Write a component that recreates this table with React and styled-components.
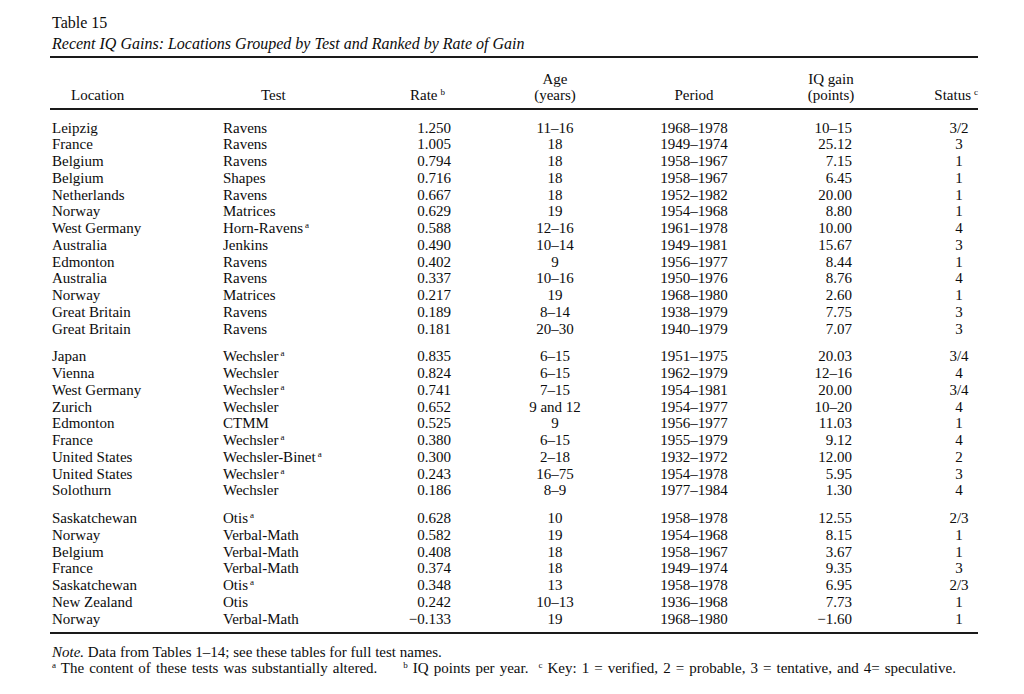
import React from 'react';
import styled, { createGlobalStyle } from 'styled-components';

const GlobalStyle = createGlobalStyle`
  html, body {
    margin: 0;
    background: #ffffff;
  }
  body {
    font-family: "Liberation Serif", "Times New Roman", serif;
    color: #0c0c0c;
  }
`;

// track widths, left edge of the table sits at x=50
const COLUMNS = '172px 118px 111px 208px 70px 204px 45px';

const HEAD = [
  { lines: ['Location'], align: 'flex-start', pl: 21 },
  { lines: ['Test'], align: 'flex-start', pl: 39 },
  { lines: ['Rate'], sup: 'b', align: 'flex-end', pr: 6 },
  { lines: ['Age', '(years)'], align: 'center' },
  { lines: ['Period'], align: 'center' },
  { lines: ['IQ gain', '(points)'], align: 'center' },
  { lines: ['Status'], sup: 'c', align: 'flex-end' },
];

const BODY_ALIGN = [
  { align: 'flex-start', pl: 2 },
  { align: 'flex-start', pl: 1 },
  { align: 'flex-end' },
  { align: 'center' },
  { align: 'center' },
  { align: 'flex-end', pr: 81 },
  { align: 'center', pl: 7 },
];

const groups = [
  [
    ['Leipzig', 'Ravens', '1.250', '11–16', '1968–1978', '10–15', '3/2'],
    ['France', 'Ravens', '1.005', '18', '1949–1974', '25.12', '3'],
    ['Belgium', 'Ravens', '0.794', '18', '1958–1967', '7.15', '1'],
    ['Belgium', 'Shapes', '0.716', '18', '1958–1967', '6.45', '1'],
    ['Netherlands', 'Ravens', '0.667', '18', '1952–1982', '20.00', '1'],
    ['Norway', 'Matrices', '0.629', '19', '1954–1968', '8.80', '1'],
    ['West Germany', 'Horn-Ravens*', '0.588', '12–16', '1961–1978', '10.00', '4'],
    ['Australia', 'Jenkins', '0.490', '10–14', '1949–1981', '15.67', '3'],
    ['Edmonton', 'Ravens', '0.402', '9', '1956–1977', '8.44', '1'],
    ['Australia', 'Ravens', '0.337', '10–16', '1950–1976', '8.76', '4'],
    ['Norway', 'Matrices', '0.217', '19', '1968–1980', '2.60', '1'],
    ['Great Britain', 'Ravens', '0.189', '8–14', '1938–1979', '7.75', '3'],
    ['Great Britain', 'Ravens', '0.181', '20–30', '1940–1979', '7.07', '3'],
  ],
  [
    ['Japan', 'Wechsler*', '0.835', '6–15', '1951–1975', '20.03', '3/4'],
    ['Vienna', 'Wechsler', '0.824', '6–15', '1962–1979', '12–16', '4'],
    ['West Germany', 'Wechsler*', '0.741', '7–15', '1954–1981', '20.00', '3/4'],
    ['Zurich', 'Wechsler', '0.652', '9 and 12', '1954–1977', '10–20', '4'],
    ['Edmonton', 'CTMM', '0.525', '9', '1956–1977', '11.03', '1'],
    ['France', 'Wechsler*', '0.380', '6–15', '1955–1979', '9.12', '4'],
    ['United States', 'Wechsler-Binet*', '0.300', '2–18', '1932–1972', '12.00', '2'],
    ['United States', 'Wechsler*', '0.243', '16–75', '1954–1978', '5.95', '3'],
    ['Solothurn', 'Wechsler', '0.186', '8–9', '1977–1984', '1.30', '4'],
  ],
  [
    ['Saskatchewan', 'Otis*', '0.628', '10', '1958–1978', '12.55', '2/3'],
    ['Norway', 'Verbal-Math', '0.582', '19', '1954–1968', '8.15', '1'],
    ['Belgium', 'Verbal-Math', '0.408', '18', '1958–1967', '3.67', '1'],
    ['France', 'Verbal-Math', '0.374', '18', '1949–1974', '9.35', '3'],
    ['Saskatchewan', 'Otis*', '0.348', '13', '1958–1978', '6.95', '2/3'],
    ['New Zealand', 'Otis', '0.242', '10–13', '1936–1968', '7.73', '1'],
    ['Norway', 'Verbal-Math', '−0.133', '19', '1968–1980', '−1.60', '1'],
  ],
];

const Page = styled.div`
  padding: 13px 0 0 50px;
  width: 928px;
`;

const Caption = styled.div`
  padding-left: 2px;
  font-size: 16px;
`;

const Label = styled.div`
  line-height: 20px;
`;

const Subtitle = styled.div`
  font-style: italic;
  line-height: 22px;
`;

const Rule = styled.div`
  height: 2px;
  background: #1a1a1a;
  margin-top: ${(p) => p.$mt || 0}px;
`;

const Grid = styled.div`
  display: grid;
  grid-template-columns: ${COLUMNS};
  font-size: 15px;
`;

const HeadRow = styled(Grid)`
  margin-top: 13px;
  padding-bottom: 5px;
  line-height: 16px;
  height: 32px;
`;

const HeadCell = styled.div`
  display: flex;
  flex-direction: column;
  justify-content: flex-end;
  align-items: ${(p) => p.$align};
  padding-left: ${(p) => p.$pl || 0}px;
  padding-right: ${(p) => p.$pr || 0}px;
  white-space: nowrap;
`;

const Body = styled.div`
  padding-top: 9.6px;
  padding-bottom: 5px;
`;

const Group = styled.div`
  & + & {
    margin-top: 11px;
  }
`;

const DataRow = styled(Grid)`
  height: 16.75px;
  line-height: 16.75px;
`;

const Cell = styled.div`
  display: flex;
  justify-content: ${(p) => p.$align};
  padding-left: ${(p) => p.$pl || 0}px;
  padding-right: ${(p) => p.$pr || 0}px;
  white-space: nowrap;
`;

const Sup = styled.sup`
  font-size: 9px;
  line-height: 0;
  vertical-align: 5px;
  margin-left: ${(p) => p.$ml ?? 2}px;
`;

const Notes = styled.div`
  margin-top: 11px;
  padding-left: 2px;
  font-size: 15px;
  line-height: 15.5px;
`;

const NoteLine = styled.div`
  white-space: nowrap;
  word-spacing: ${(p) => p.$ws || 0}px;
`;

const Foot = styled.span`
  margin-right: ${(p) => p.$mr || 0}px;
`;

const withMark = (text) =>
  text.endsWith('*') ? (
    <span>
      {text.slice(0, -1)}
      <Sup>a</Sup>
    </span>
  ) : (
    <span>{text}</span>
  );

const App = () => {
  return (
    <Page>
      <GlobalStyle />
      <Caption>
        <Label>Table 15</Label>
        <Subtitle>Recent IQ Gains: Locations Grouped by Test and Ranked by Rate of Gain</Subtitle>
      </Caption>
      <Rule $mt={1} />

      <HeadRow>
        {HEAD.map((h, i) => (
          <HeadCell key={i} $align={h.align} $pl={h.pl} $pr={h.pr}>
            {h.lines.map((line, j) => (
              <div key={j}>
                {line}
                {h.sup && j === h.lines.length - 1 && <Sup $ml={3}>{h.sup}</Sup>}
              </div>
            ))}
          </HeadCell>
        ))}
      </HeadRow>
      <Rule />

      <Body>
        {groups.map((rows, g) => (
          <Group key={g}>
            {rows.map((row, r) => (
              <DataRow key={r}>
                {row.map((value, c) => (
                  <Cell key={c} $align={BODY_ALIGN[c].align} $pl={BODY_ALIGN[c].pl} $pr={BODY_ALIGN[c].pr}>
                    {withMark(value)}
                  </Cell>
                ))}
              </DataRow>
            ))}
          </Group>
        ))}
      </Body>
      <Rule />

      <Notes>
        <NoteLine>
          <i>Note.</i> Data from Tables 1–14; see these tables for full test names.
        </NoteLine>
        <NoteLine $ws={1.3}>
          <Foot $mr={26}>
            <Sup $ml={0}>a</Sup> The content of these tests was substantially altered.
          </Foot>
          <Foot $mr={10}>
            <Sup $ml={0}>b</Sup> IQ points per year.
          </Foot>
          <Foot>
            <Sup $ml={0}>c</Sup> Key: 1 = verified, 2 = probable, 3 = tentative, and 4= speculative.
          </Foot>
        </NoteLine>
      </Notes>
    </Page>
  );
};

export default App;
